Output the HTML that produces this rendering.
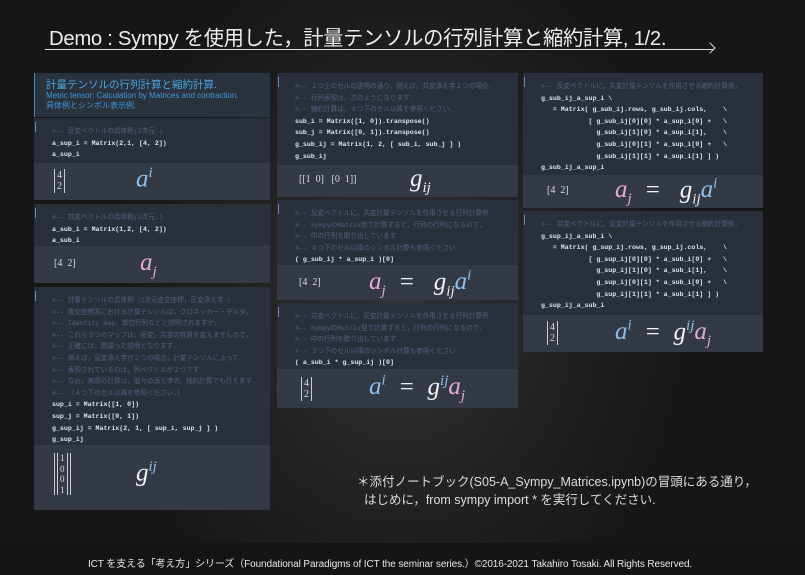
<!DOCTYPE html>
<html><head><meta charset="utf-8"><style>
*{margin:0;padding:0;box-sizing:border-box}
body{width:805px;height:575px;overflow:hidden;position:relative;
background:radial-gradient(ellipse 300px 380px at 400px 300px,#343434 0%,#232323 50%,#161616 100%);
font-family:"Liberation Sans","Noto Sans CJK JP",sans-serif;}
.title{position:absolute;left:49px;top:21px;color:#eee;font-size:20.3px;font-family:"Liberation Sans","Noto Sans CJK JP",sans-serif;letter-spacing:-0.3px;white-space:nowrap}
.line{position:absolute;left:45px;top:49px;width:668px;height:1px;background:#ddd}
.arrow{position:absolute;left:706px;top:44px;width:8px;height:8px;border-top:1px solid #ddd;border-right:1px solid #ddd;transform:rotate(45deg)}
.box{position:absolute;background:#2a313c;}
.code{position:absolute;left:0;right:0;top:0;background:#29303b;padding:8px 0 0 18px;font-family:"Liberation Mono","Noto Sans CJK JP",monospace;font-size:6.6px;line-height:11.6px;color:#dfe4ea;white-space:pre;overflow:hidden;font-weight:bold}
.code:before{content:"";position:absolute;left:1px;top:4px;width:1px;height:10px;background:#6a8ab0}
.c{color:#52607e;font-weight:normal}
.out{position:absolute;left:0;right:0;bottom:0;background:#333a46;color:#dde;font-family:"Liberation Serif",serif}
.m{position:absolute;font-family:"Liberation Serif",serif;font-style:italic;font-size:25px;color:#f2f2f2;white-space:nowrap}
.bl{color:#8ebfee}.pk{color:#e7a8d8}
sup,sub{font-size:15px}
.mat{position:absolute;font-size:10px;color:#ddd;font-family:"Liberation Serif",serif;white-space:nowrap}
.note{position:absolute;left:357px;top:473px;color:#ddd;font-size:12.5px;line-height:18px;font-family:"Liberation Sans","Noto Sans CJK JP",sans-serif}
.foot{position:absolute;left:0;top:543px;width:805px;height:32px;background:#141414}
.foot span{position:absolute;left:88px;top:12px;color:#e8e8e8;font-size:10px;white-space:nowrap;letter-spacing:-0.1px}
</style></head><body>
<div class="title">Demo : Sympy を使用した，計量テンソルの行列計算と縮約計算, 1/2.</div>
<div class="line"></div><div class="arrow"></div>

<div class="box" style="left:34px;top:73px;width:236px;height:44px;background:#2a323e;border-left:1px solid #3a8ac0">
<div style="position:absolute;left:11px;top:4px;color:#4aa6e0;font-size:10.5px;font-family:'Liberation Sans','Noto Sans CJK JP',sans-serif">計量テンソルの行列計算と縮約計算.</div>
<div style="position:absolute;left:11px;top:18px;color:#3e98d8;font-size:8px;line-height:10px;font-family:'Liberation Sans','Noto Sans CJK JP',sans-serif">Metric tensor: Calculation by Matrices and contraction.<br>具体例とシンボル表示例.</div>
</div>
<div class="box" style="left:34px;top:118px;width:236px;height:82px">
<div class="code" style="height:45px"><span class="c">#-- 反変ベクトルの具体例(2次元.)</span>
a_sup_i = Matrix(2,1, [4, 2])
a_sup_i</div>
<div class="out" style="height:37px">
<div class="mat" style="left:20px;top:6px;line-height:11px;border-left:1px solid #ccc;border-right:1px solid #ccc;padding:1px 2px">4<br>2</div>
<div class="m bl" style="left:102px;top:2px">a<sup>i</sup></div></div>
</div>
<div class="box" style="left:34px;top:204px;width:236px;height:79px">
<div class="code" style="height:42px"><span class="c">#-- 共変ベクトルの具体例(2次元.)</span>
a_sub_i = Matrix(1,2, [4, 2])
a_sub_i</div>
<div class="out" style="height:37px">
<div class="mat" style="left:20px;top:12px">[4&nbsp;&nbsp;2]</div>
<div class="m pk" style="left:106px;top:3px">a<sub>j</sub></div></div>
</div>
<div class="box" style="left:34px;top:287px;width:236px;height:223px">
<div class="code" style="height:158px"><span class="c">#-- 計量テンソルの具体例（2次元直交座標，反変添え字.）
#-- 直交座標系における計量テンソルは，クロネッカー・デルタ，
#-- Identity map，単位行列などと説明されますが，
#-- これら３つのマップは，反変，共変の性質を変えませんので，
#-- 正確には，間違った説明となります.
#-- 例えば，反変添え字が２つの場合，計量テンソルによって
#-- 表現されているのは，列ベクトルが２つです.
#-- なお，実際の計算は，個々の添え字の，縮約計算でも行えます.
#-- （４つ下のセル以降を参照ください.）</span>
sup_i = Matrix([1, 0])
sup_j = Matrix([0, 1])
g_sup_ij = Matrix(2, 1, [ sup_i, sup_j ] )
g_sup_ij</div>
<div class="out" style="height:65px">
<div class="mat" style="left:20px;top:8px;line-height:10.5px;border-left:1px solid #ccc;border-right:1px solid #ccc;padding:0 2px;font-size:9px;text-align:center"><span style="border-left:1px solid #ccc;border-right:1px solid #ccc;padding:0 2px;display:inline-block">1<br>0</span><br><span style="border-left:1px solid #ccc;border-right:1px solid #ccc;padding:0 2px;display:inline-block">0<br>1</span></div>
<div class="m" style="left:102px;top:14px">g<sup class="bl">ij</sup></div></div>
</div>

<div class="box" style="left:277px;top:73px;width:241px;height:124px">
<div class="code" style="height:92px"><span class="c">#-- １つ上のセルの説明の通り，例えば，共変添え字２つの場合，
#-- 行列表現は，次のようになります.
#-- 縮約計算は，４つ下のセル以降を参照ください.</span>
sub_i = Matrix([1, 0]).transpose()
sub_j = Matrix([0, 1]).transpose()
g_sub_ij = Matrix(1, 2, [ sub_i, sub_j ] )
g_sub_ij</div>
<div class="out" style="height:32px">
<div class="mat" style="left:22px;top:9px">[[1&nbsp;&nbsp;0]&nbsp;&nbsp;&nbsp;[0&nbsp;&nbsp;1]]</div>
<div class="m" style="left:133px;top:0px">g<sub>ij</sub></div></div>
</div>
<div class="box" style="left:277px;top:200px;width:241px;height:100px">
<div class="code" style="height:65px"><span class="c">#-- 反変ベクトルに，共変計量テンソルを作用させる行列計算例.
#-- SympyのMatrix型で計算すると，行列の行列になるので，
#-- 中の行列を取り出しています.
#-- ４つ下のセル以降のシンボル計算も参照ください.</span>
( g_sub_ij * a_sup_i )[0]</div>
<div class="out" style="height:35px">
<div class="mat" style="left:22px;top:12px">[4&nbsp;&nbsp;2]</div>
<div class="m" style="left:92px;top:3px"><span class="pk">a<sub>j</sub></span>&nbsp;&nbsp;=&nbsp;&nbsp;&nbsp;g<sub>ij</sub><span class="bl">a<sup>i</sup></span></div></div>
</div>
<div class="box" style="left:277px;top:303px;width:241px;height:105px">
<div class="code" style="height:66px"><span class="c">#-- 共変ベクトルに，反変計量テンソルを作用させる行列計算例.
#-- SympyのMatrix型で計算すると，行列の行列になるので，
#-- 中の行列を取り出しています.
#-- ３つ下のセル以降のシンボル計算も参照ください.</span>
( a_sub_i * g_sup_ij )[0]</div>
<div class="out" style="height:39px">
<div class="mat" style="left:24px;top:8px;line-height:11px;border-left:1px solid #ccc;border-right:1px solid #ccc;padding:1px 2px">4<br>2</div>
<div class="m" style="left:92px;top:4px"><span class="bl">a<sup>i</sup></span>&nbsp;&nbsp;=&nbsp;&nbsp;g<sup class="bl">ij</sup><span class="pk">a<sub>j</sub></span></div></div>
</div>

<div class="box" style="left:523px;top:73px;width:240px;height:135px">
<div class="code" style="height:102px"><span class="c">#-- 反変ベクトルに，共変計量テンソルを作用させる縮約計算例.</span>
g_sub_ij_a_sup_i \
   = Matrix( g_sub_ij.rows, g_sub_ij.cols,    \
            [ g_sub_ij[0][0] * a_sup_i[0] +   \
              g_sub_ij[1][0] * a_sup_i[1],    \
              g_sub_ij[0][1] * a_sup_i[0] +   \
              g_sub_ij[1][1] * a_sup_i[1] ] )
g_sub_ij_a_sup_i</div>
<div class="out" style="height:33px">
<div class="mat" style="left:24px;top:10px">[4&nbsp;&nbsp;2]</div>
<div class="m" style="left:92px;top:1px"><span class="pk">a<sub>j</sub></span>&nbsp;&nbsp;=&nbsp;&nbsp;&nbsp;g<sub>ij</sub><span class="bl">a<sup>i</sup></span></div></div>
</div>
<div class="box" style="left:523px;top:211px;width:240px;height:141px">
<div class="code" style="height:104px"><span class="c">#-- 共変ベクトルに，反変計量テンソルを作用させる縮約計算例.</span>
g_sup_ij_a_sub_i \
   = Matrix( g_sup_ij.rows, g_sup_ij.cols,    \
            [ g_sup_ij[0][0] * a_sub_i[0] +   \
              g_sup_ij[1][0] * a_sub_i[1],    \
              g_sup_ij[0][1] * a_sub_i[0] +   \
              g_sup_ij[1][1] * a_sub_i[1] ] )
g_sup_ij_a_sub_i</div>
<div class="out" style="height:37px">
<div class="mat" style="left:24px;top:6px;line-height:11px;border-left:1px solid #ccc;border-right:1px solid #ccc;padding:1px 2px">4<br>2</div>
<div class="m" style="left:92px;top:3px"><span class="bl">a<sup>i</sup></span>&nbsp;&nbsp;=&nbsp;&nbsp;g<sup class="bl">ij</sup><span class="pk">a<sub>j</sub></span></div></div>
</div>

<div class="note">＊添付ノートブック(S05-A_Sympy_Matrices.ipynb)の冒頭にある通り，<br>&nbsp;&nbsp;はじめに，from sympy import * を実行してください.</div>
<div class="foot"><span>ICT を支える「考え方」シリーズ（Foundational Paradigms of ICT the seminar series.）©2016-2021 Takahiro Tosaki. All Rights Reserved.</span></div>
</body></html>
